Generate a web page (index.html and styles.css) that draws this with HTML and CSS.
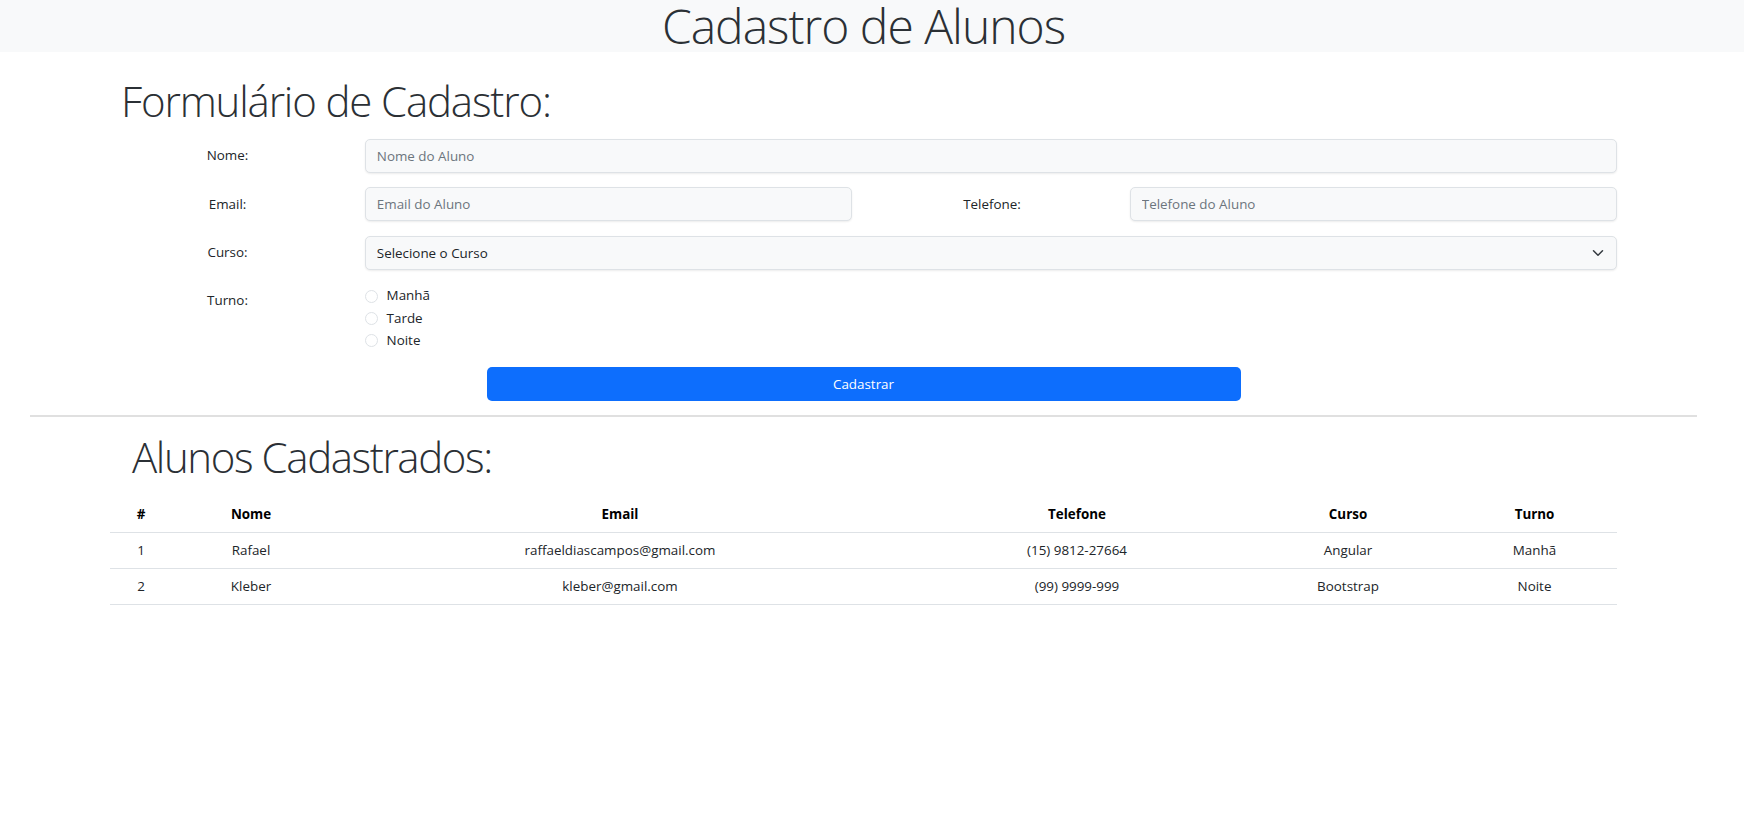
FILE: index.html
```html
<!DOCTYPE html>
<html lang="pt-BR">
<head>
<meta charset="utf-8">
<title>Cadastro de Alunos</title>
<link rel="stylesheet" href="styles.css">
</head>
<body>
<header class="topbar">
  <h1 class="title">Cadastro de Alunos</h1>
</header>
<main>
  <section class="container form-section">
    <h2 class="heading heading-form">Formulário de Cadastro:</h2>
    <form class="form">
      <div class="row">
        <label class="label">Nome:</label>
        <input class="field" type="text" placeholder="Nome do Aluno">
      </div>
      <div class="row">
        <label class="label">Email:</label>
        <input class="field field-half" type="text" placeholder="Email do Aluno">
        <label class="label label-mid">Telefone:</label>
        <input class="field field-half" type="text" placeholder="Telefone do Aluno">
      </div>
      <div class="row">
        <label class="label">Curso:</label>
        <div class="select-wrap">
          <select class="field select"><option>Selecione o Curso</option></select>
          <svg class="chevron" viewBox="0 0 16 16" width="12" height="12"><path d="m2 5 6 6 6-6" fill="none" stroke="#343a40" stroke-width="2" stroke-linecap="round" stroke-linejoin="round"/></svg>
        </div>
      </div>
      <div class="row row-top">
        <span class="label label-top">Turno:</span>
        <div class="radios">
          <label class="radio"><input type="radio" name="turno" class="radio-input"><span>Manhã</span></label>
          <label class="radio"><input type="radio" name="turno" class="radio-input"><span>Tarde</span></label>
          <label class="radio"><input type="radio" name="turno" class="radio-input"><span>Noite</span></label>
        </div>
      </div>
      <div class="actions">
        <button type="button" class="btn">Cadastrar</button>
      </div>
    </form>
  </section>
  <hr class="divider">
  <section class="container list-section">
    <h2 class="heading heading-list">Alunos Cadastrados:</h2>
    <table class="table">
      <colgroup>
        <col class="c1"><col class="c2"><col class="c3"><col class="c4"><col class="c5"><col class="c6">
      </colgroup>
      <thead>
        <tr><th>#</th><th>Nome</th><th>Email</th><th>Telefone</th><th>Curso</th><th>Turno</th></tr>
      </thead>
      <tbody>
        <tr><td>1</td><td>Rafael</td><td>raffaeldiascampos@gmail.com</td><td>(15) 9812-27664</td><td>Angular</td><td>Manhã</td></tr>
        <tr><td>2</td><td>Kleber</td><td>kleber@gmail.com</td><td>(99) 9999-999</td><td>Bootstrap</td><td>Noite</td></tr>
      </tbody>
    </table>
  </section>
</main>
</body>
</html>
```
FILE: styles.css
```css
* { box-sizing: border-box; }

body {
  margin: 0;
  font-family: "Open Sans", "Noto Sans", "Liberation Sans", sans-serif;
  font-size: 13.4px;
  line-height: 21.6px;
  color: #212529;
  background: #ffffff;
}

.topbar {
  background: #f8f9fa;
  height: 52px;
  padding-right: 17px;
  text-align: center;
}

.title {
  margin: 0;
  font-size: 48px;
  font-weight: 300;
  letter-spacing: -1px;
  line-height: 52px;
  color: #2b3035;
}

.container {
  margin-left: 110px;
  width: 1507px;
}

.heading {
  margin: 0;
  font-size: 42px;
  font-weight: 300;
  line-height: 50px;
  color: #2b3035;
}

.heading-form {
  padding-top: 24px;
  padding-left: 11px;
  margin-bottom: 13px;
  letter-spacing: -1.15px;
}

.heading-list {
  padding-left: 22px;
  margin-top: 15px;
  margin-bottom: 15px;
  letter-spacing: -1.4px;
}

.form {
  display: flex;
  flex-direction: column;
  gap: 14.4px;
}

.row {
  display: flex;
  align-items: center;
  gap: 20px;
}

.row-top {
  align-items: flex-start;
}

.label {
  width: 235px;
  flex: none;
  text-align: center;
}

.label-top {
  padding-top: 5.4px;
}

.row .label-mid {
  margin: 0 -20px;
  width: 278px;
  padding-left: 2px;
}

.field {
  flex: 1;
  height: 34px;
  padding: 0 10.8px;
  border: 1px solid #dee2e6;
  border-radius: 5px;
  background: #f8f9fa;
  box-shadow: 0 1px 2px rgba(0, 0, 0, 0.075);
  font-family: inherit;
  font-size: 13.4px;
  color: #212529;
  outline: none;
}

.field::placeholder {
  color: #6c757d;
}

.field-half {
  flex: none;
  width: 487px;
}

.select-wrap {
  position: relative;
  flex: 1;
  display: flex;
}

.select {
  appearance: none;
  -webkit-appearance: none;
  width: 100%;
}

.chevron {
  position: absolute;
  right: 13px;
  top: 11px;
  width: 12px;
  height: 12px;
  pointer-events: none;
}

.radios {
  display: flex;
  flex-direction: column;
  padding-top: 1px;
}

.radio {
  display: flex;
  align-items: center;
  gap: 8.6px;
  height: 22.2px;
}

.radio-input {
  appearance: none;
  -webkit-appearance: none;
  margin: 0;
  width: 13px;
  height: 13px;
  border: 1px solid #dee2e6;
  border-radius: 50%;
  background: #ffffff;
  flex: none;
}

.actions {
  display: flex;
  justify-content: center;
  padding-top: 1px;
}

.btn {
  width: 754px;
  height: 34px;
  border: none;
  border-radius: 5px;
  background: #0d6efd;
  color: #ffffff;
  font-family: inherit;
  font-size: 13.4px;
}

.divider {
  margin: 14px 47px 0 30px;
  border: none;
  border-top: 2px solid #e0e0e0;
  height: 0;
}

.table {
  width: 1507px;
  border-collapse: collapse;
  table-layout: fixed;
}

.c1 { width: 62px; }
.c2 { width: 158px; }
.c3 { width: 580px; }
.c4 { width: 334px; }
.c5 { width: 208px; }
.c6 { width: 165px; }

.table th,
.table td {
  padding: 7px;
  line-height: 21px;
  text-align: center;
  border-bottom: 1px solid #dee2e6;
}

.table th {
  font-weight: 700;
  color: #000000;
}
```
